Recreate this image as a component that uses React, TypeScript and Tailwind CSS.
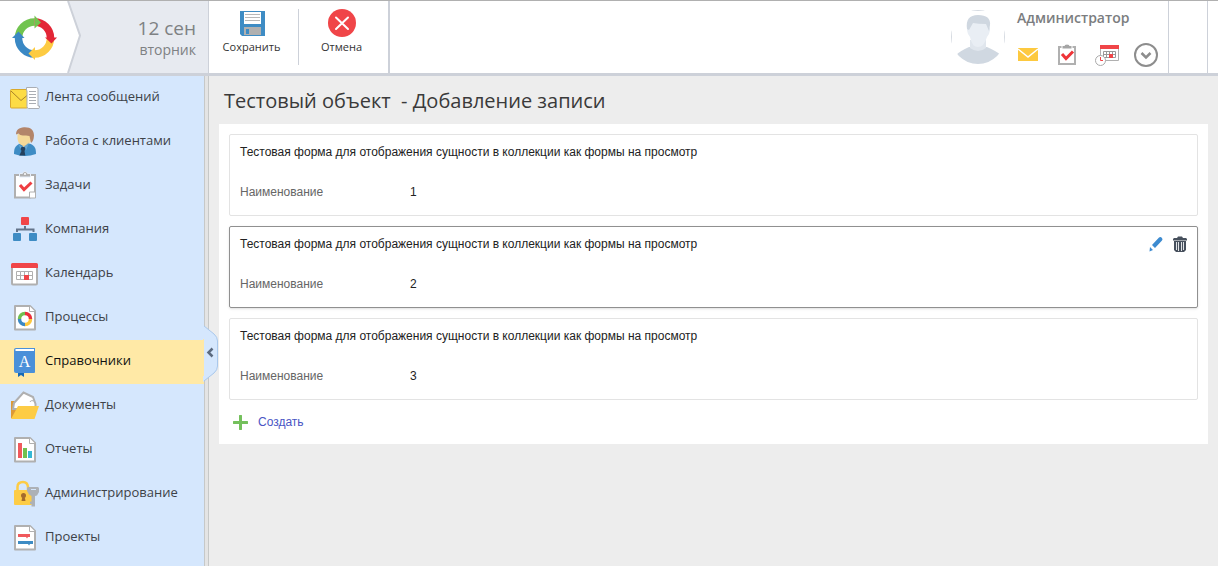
import React from "react";

const PageIcon = ({ children }: { children?: React.ReactNode }) => (
  <g>
    <path d="M6 4h15l5 5v18.500H6z" fill="#fff" stroke="#b0b0b0" strokeWidth="2" strokeLinejoin="round" />
    <path d="M20.500 4v5.500H26" fill="#fff" stroke="#b0b0b0" />
    {children}
  </g>
);

const icons: Record<string, React.ReactNode> = {
  feed: (
    <>
      <rect x="1.500" y="7.500" width="17" height="18.500" rx="1" fill="#fddc45" stroke="#d9a92c" />
      <path d="M2 9l10 9.500 6-5" fill="none" stroke="#a8822a" />
      <path d="M17.500 5.500h10q1.500 0 1.500 2v16.500h1.500v1.500q0 1-1.500 1H19.500q-1.500 0-1.500-2V8.500h-.5z" fill="#fff" stroke="#a9adb3" />
      <path d="M20 9.500h7M20 12.500h7M20 15.500h7M20 18.500h7M20 21.500h7" stroke="#a9adb3" />
    </>
  ),
  clients: (
    <>
      <path d="M5 28c0-7 2-9 7-10.500h8c5 1.500 7 3.500 7 10.500q-11 4-22 0z" fill="#3e8cc4" />
      <path d="M11 16l4 6 5-5v-3h-9z" fill="#e9c58a" />
      <path d="M8.500 8v5q1 6 6 6.500 6 0 8.500-6.500V7z" fill="#f5d998" />
      <path d="M7 8.500C7 4 10 1.500 15 1.200c7-.3 10 3 10 8.300-.3 4-1 6-3 7.500L20.500 10c-5-.5-9 0-11-2.500z" fill="#b3856a" />
      <path d="M9 17.500l4.500 4-1.500 2.500zM20 16.500l-6 5 3 3z" fill="#62a4d2" />
      <path d="M12.500 21h3l1 2-1 2 .8 4.500h-6l2.200-4.500-1-2z" fill="#24405c" />
    </>
  ),
  tasks: (
    <>
      <path d="M6 5h20v17l-5 5.500H6z" fill="#fff" stroke="#b0b0b0" strokeWidth="2" />
      <path d="M20.500 28v-6h6v6z" fill="#fff" stroke="#b0b0b0" />
      <path d="M10.500 7V3.500H13.500Q14 1.500 16 1.500t2.500 2H21.500V7z" fill="#b0b0b0" stroke="#e6effb" />
      <circle cx="16" cy="4" r="1" fill="#fff" />
      <path d="M11 15l4 4.500L22.500 12.500" fill="none" stroke="#ee3e42" strokeWidth="3" />
    </>
  ),
  company: (
    <>
      <path d="M8 18v-2.500h16.500V18M16 15v-3" fill="none" stroke="#64748a" strokeWidth="2" />
      <rect x="12" y="3" width="8" height="8" rx="1" fill="#f04548" />
      <rect x="4" y="19" width="8" height="8" rx="1" fill="#3e8cc4" />
      <rect x="20" y="19" width="8" height="8" rx="1" fill="#3e8cc4" />
    </>
  ),
  calendar: (
    <>
      <rect x="3" y="7" width="25" height="19.500" rx="1" fill="#fff" stroke="#b0b0b0" strokeWidth="2" />
      <path d="M2 10V6.500Q2 5 3.500 5h24Q29 5 29 6.500V10z" fill="#f04548" />
      <path d="M7.500 17.500v4h16v-8h-12v8M7.500 17.500h16M11.500 13.500h-4v4M15.500 13.500v8M19.500 13.500v8" fill="none" stroke="#b0b0b0" />
      <rect x="15" y="17" width="5" height="5" fill="#f04548" />
    </>
  ),
  processes: (
    <PageIcon>
      <g fill="none" strokeWidth="3.500">
        <path d="M10.500 17a5.500 5.500 0 0 1 5.500-5.500" stroke="#71c050" />
        <path d="M16 11.500a5.500 5.500 0 0 1 5.500 5.500" stroke="#ea2f3b" />
        <path d="M21.500 17a5.500 5.500 0 0 1-5.500 5.500" stroke="#fdc83e" />
        <path d="M16 22.500a5.500 5.500 0 0 1-5.500-5.500" stroke="#3a88c4" />
      </g>
    </PageIcon>
  ),
  reference: (
    <>
      <path d="M9 25h6v6l-3-2-3 2z" fill="#1768b4" />
      <path d="M5 4q0-2 2-2h19v24q0 1-1 1H7q-2 0-2-2z" fill="#4a90d9" />
      <path d="M6.500 3H25v2H6.500z" fill="#fff" />
      <text x="15.500" y="21" textAnchor="middle" fontSize="16" fill="#fff" fontFamily="Liberation Serif, serif">A</text>
    </>
  ),
  documents: (
    <>
      <path d="M2 11h9v17H2z" fill="#dd9a37" />
      <path d="M5 13L14.500 2.500 24 7l2.500 7v5H4z" fill="#fff" stroke="#b0b0b0" strokeWidth="2" />
      <path d="M21 12q1-2.500 5-.5" fill="none" stroke="#b0b0b0" />
      <path d="M9 16h21l-4.500 13H2z" fill="#fdcc45" />
    </>
  ),
  reports: (
    <PageIcon>
      <path d="M9 9h4v15H9z" fill="#f0595c" />
      <path d="M14 14h4v10h-4z" fill="#71c050" />
      <path d="M19 17h4v7h-4z" fill="#35b8d5" />
    </PageIcon>
  ),
  admin: (
    <>
      <path d="M8.500 13V9q0-5 5.500-5 4.500 0 5 5v4" fill="none" stroke="#fdcc45" strokeWidth="2.500" />
      <rect x="5" y="12" width="18" height="15" rx="1" fill="#fdcc45" />
      <circle cx="14.500" cy="17.500" r="2.500" fill="#a46c2c" />
      <path d="M13.500 18h2l1 5h-4z" fill="#a46c2c" />
      <path d="M19 9h10l1 1v4l-2 3.500-2 .5v10.500h-3.500V26H21v-2.500h1.500V18L20 16.500 18 13v-3z" fill="#adb1b6" />
      <rect x="22" y="11" width="5" height="1" fill="#d5e7fd" />
    </>
  ),
  projects: (
    <PageIcon>
      <path d="M9 12h12v3h-2l-1 1.500-1-1.500H9z" fill="#f0595c" />
      <path d="M9 19h15v3h-3l-1 1.500-1-1.500H9z" fill="#3e8cc4" />
    </PageIcon>
  ),
};

const menu = [
  { icon: "feed", label: "Лента сообщений" },
  { icon: "clients", label: "Работа с клиентами" },
  { icon: "tasks", label: "Задачи" },
  { icon: "company", label: "Компания" },
  { icon: "calendar", label: "Календарь" },
  { icon: "processes", label: "Процессы" },
  { icon: "reference", label: "Справочники", active: true },
  { icon: "documents", label: "Документы" },
  { icon: "reports", label: "Отчеты" },
  { icon: "admin", label: "Администрирование" },
  { icon: "projects", label: "Проекты" },
];

const Logo = () => (
  <svg viewBox="0 0 46 46" className="w-[46px] h-[46px]">
    <g fill="none" strokeWidth="7.500">
      <path d="M7.500 24a16 16 0 0 1 16-16" stroke="#71c44f" />
      <path d="M23.500 8a16 16 0 0 1 16 16" stroke="#e32636" />
      <path d="M39.500 24a16 16 0 0 1-16 16" stroke="#fdcb42" />
      <path d="M23.500 40a16 16 0 0 1-16-16" stroke="#3a88c4" />
    </g>
    <path d="M23.500 1.500l6.500 7-6.500 6z" fill="#71c44f" />
    <path d="M34 23.500h12l-5.500 6z" fill="#e32636" />
    <path d="M24 33v13l-6.500-6.500z" fill="#fdcb42" />
    <path d="M1 24h12.500L7.500 17.500z" fill="#3a88c4" />
  </svg>
);

const Header = () => (
  <header className="flex h-[76px] shrink-0 bg-white border-t border-t-[#b0b0b0] border-b-3 border-b-[#cdd1d9]">
    <div className="flex w-[209px] bg-[#e7eaf0] border-r border-[#cdd1d9]">
      <a href="#" aria-label="Главная" className="flex items-center justify-center w-[67px] bg-white">
        <Logo />
      </a>
      <svg viewBox="0 0 14 72" className="w-[14px] h-full" preserveAspectRatio="none">
        <path d="M0 0h1l12 34.500L1 72H0z" fill="#fff" />
        <path d="M1 0l12 34.500L1 72" fill="none" stroke="#cdd1d9" strokeWidth="2" />
      </svg>
      <div className="flex-1 pt-[15px] pr-3 text-right text-[#7e8183]">
        <div className="text-[19px] leading-6">12 сен</div>
        <div className="text-sm leading-5">вторник</div>
      </div>
    </div>

    <div className="flex items-start w-[181px] border-r-2 border-[#cdd1d9] text-[11px] text-[#333]">
      <button className="flex flex-col items-center w-[89px] pt-2 pr-1">
        <svg viewBox="0 0 28 28" className="w-7 h-7">
          <path d="M2 2h25v25H4l-2-2z" fill="#3e8cc4" />
          <path d="M6 3h17v12H6z" fill="#fff" />
          <path d="M7 5.500h15M7 8.500h15M7 11.500h15" stroke="#b8b8b8" />
          <path d="M6 18h17v8H6z" fill="#b0b0b0" />
          <path d="M8 20h3v5H8z" fill="#3e8cc4" />
        </svg>
        <span className="leading-5">Сохранить</span>
      </button>
      <div className="w-px h-14 mt-2 bg-[#cdd1d9]" />
      <button className="flex flex-col items-center flex-1 pt-2 pr-1">
        <svg viewBox="0 0 28 28" className="w-7 h-7">
          <circle cx="14" cy="14" r="14" fill="#f04548" />
          <path d="M8 8.500l12 11.500M20 8.500L8 20" stroke="#fff" strokeWidth="2" strokeLinecap="round" />
        </svg>
        <span className="leading-5">Отмена</span>
      </button>
    </div>

    <div className="flex flex-1 justify-end">
      <svg viewBox="0 0 54 54" className="w-[54px] h-[54px] mt-[9px]">
        <defs>
          <clipPath id="avatar">
            <circle cx="27" cy="27" r="27" />
          </clipPath>
        </defs>
        <g clipPath="url(#avatar)">
          <path d="M0 18h1v18H0zM53 18h1v18h-1zM19 0h16v1H19z" fill="#d5dae1" />
          <path d="M5 45q4-4 13-8h18q9 4 14 8v10H5z" fill="#d0d8e1" />
          <path d="M19 30h16v8q-8 6-16 0z" fill="#e0e6ed" />
          <path d="M17 17q-2 1 0 7l2 3q2 10 8 10t9-10l2-3q2-6 0-7l-3-7H20z" fill="#e9eef4" />
          <path d="M16 19Q14 5 27 5q13 0 12 10l-1 6-3-7q-8 0-13-1l-4 7z" fill="#cfd7e0" />
        </g>
      </svg>
      <div className="w-[164px] pt-[7px] pl-3 border-r border-[#cdd1d9]">
        <div className="text-sm leading-5 font-semibold text-[#7b7d80]">Администратор</div>
        <div className="flex items-center pt-[13px]">
          <button aria-label="Сообщения" className="w-10">
            <svg viewBox="0 0 28 28" className="w-7 h-7">
              <path d="M1 7h20v13H1z" fill="#fdc93f" />
              <path d="M1 8l10 8 10-8" fill="none" stroke="#fff" strokeWidth="1.500" />
            </svg>
          </button>
          <button aria-label="Задачи" className="w-9">
            <svg viewBox="0 0 28 28" className="w-7 h-7">
              <path d="M2 6h16v17H2z" fill="#fff" stroke="#b0b0b0" strokeWidth="2" />
              <path d="M5 8V4.500h2.500Q8 3 10 3t2.500 1.500H15V8z" fill="#a5a5a5" stroke="#fff" />
              <path d="M5 13l4 4.500 7-7" fill="none" stroke="#ee3438" strokeWidth="3" />
            </svg>
          </button>
          <button aria-label="Календарь" className="w-10">
            <svg viewBox="0 0 28 28" className="w-7 h-7">
              <path d="M7.500 5.500h18v14h-18z" fill="#fff" stroke="#b0b0b0" />
              <path d="M7 4h19v4H7z" fill="#f04548" />
              <path d="M10.500 10.500h12v6h-12zM10.500 13.500h12M13.500 10.500v6M16.500 10.500v6M19.500 10.500v6" fill="none" stroke="#999" />
              <path d="M16 13h4v4h-4z" fill="#f04548" />
              <circle cx="7.500" cy="19.500" r="5" fill="#fff" stroke="#aaa" />
              <path d="M7.500 16v3.500H10" fill="none" stroke="#f04548" />
            </svg>
          </button>
          <button aria-label="Ещё">
            <svg viewBox="0 0 28 28" className="w-7 h-7">
              <circle cx="13" cy="14" r="11" fill="#fff" stroke="#8d8d8d" strokeWidth="2" />
              <path d="M8.500 12l4.500 4.500 4.500-4.500" fill="none" stroke="#8d8d8d" strokeWidth="2.500" />
            </svg>
          </button>
        </div>
      </div>
      <div className="w-[39px] border-r border-[#cdd1d9]" />
      <div className="w-[10px]" />
    </div>
  </header>
);

const Sidebar = () => (
  <aside className="relative flex w-[209px] shrink-0">
    <nav className="flex-1 bg-[#d5e7fd]">
      {menu.map((item) => (
        <a
          key={item.icon}
          href="#"
          className={`flex items-center h-11 pl-[9px] text-[13px] ${
            item.active ? "bg-[#ffe9a6] text-[#111]" : "text-[#3d4248]"
          }`}
        >
          <svg viewBox="0 0 32 32" className="w-8 h-8">
            {icons[item.icon]}
          </svg>
          <span className="pl-1 pb-0.5">{item.label}</span>
        </a>
      ))}
    </nav>
    <div className="w-[5px] border-x border-[#c6c8c8] bg-[#e4e4e4]" />
    {/* collapse handle */}
    <button aria-label="Свернуть меню" className="absolute left-[203px] top-[249px]">
      <svg viewBox="0 0 16 58" className="w-4 h-[58px]">
        <path d="M0 0L11 9q3.500 3 3.500 7v25q0 4-3.500 7L0 57z" fill="#d5e7fd" />
        <path d="M1 1l10 8q3.500 3 3.500 7v25q0 4-3.500 7L1 56" fill="none" stroke="#a9c8ec" />
        <path d="M9.500 23.500L5.500 27.500l4 4" fill="none" stroke="#5c6b80" strokeWidth="2.500" />
        <path d="M0 14h1v37H0z" fill="#ffe9a6" />
      </svg>
    </button>
  </aside>
);

const Record = ({ name, selected }: { name: string; selected?: boolean }) => (
  <div
    className={`h-[82px] pl-[10px] pr-[9px] pt-2 border rounded-xs ${
      selected ? "border-[#909090] shadow-sm" : "border-[#e3e3e3]"
    }`}
  >
    <div className="flex justify-between">
      <h2 className="leading-[18px] text-[#222]">
        Тестовая форма для отображения сущности в коллекции как формы на просмотр
      </h2>
      {selected && (
        <div className="flex items-center gap-2">
          <button aria-label="Изменить">
            <svg viewBox="0 0 16 16" className="w-4 h-4">
              <path d="M4 9l7-7.500q1.500-1 3 .5 1 1.500 0 2.500L7 12zM2 11l3 3-3.500 1.500z" fill="#3d8bd0" />
            </svg>
          </button>
          <button aria-label="Удалить">
            <svg viewBox="0 0 16 16" className="w-4 h-4">
              <path d="M1 3l1-1h3l1-1.500h4L11 2h3l1 1v1.500H1z" fill="#47505d" />
              <path d="M2 5h12v9l-2 2H4l-2-2z" fill="#47505d" />
              <path d="M4.500 6v8M6.500 6v9M9.500 6v9M11.500 6v8" stroke="#e0e3e6" />
            </svg>
          </button>
        </div>
      )}
    </div>
    <dl className="flex pt-[22px] leading-[18px]">
      <dt className="w-[170px] text-[#666]">Наименование</dt>
      <dd className="text-[#222]">{name}</dd>
    </dl>
  </div>
);

const App = () => {
  return (
    <div className="flex flex-col min-h-screen bg-[#ededed] font-['Open_Sans',sans-serif]">
      <Header />
      <div className="flex flex-1">
        <Sidebar />
        <main className="flex-1 px-[10px]">
          <h1 className="h-12 pl-[5px] pt-[10px] text-xl leading-[30px] whitespace-pre text-[#3a3a3a]">
            Тестовый объект  - Добавление записи
          </h1>
          <div className="bg-white p-[10px] font-['Liberation_Sans',sans-serif] text-xs">
            <div className="flex flex-col gap-[10px]">
              <Record name="1" />
              <Record name="2" selected />
              <Record name="3" />
            </div>
            <button className="flex items-center gap-[10px] mt-[13px] ml-1 mb-[3px] h-[18px] text-[#4a55c4]">
              <svg viewBox="0 0 15 15" className="w-[15px] h-[15px]">
                <path d="M7.500 1v13M1 7.500h13" stroke="#74c05c" strokeWidth="3" strokeLinecap="round" />
              </svg>
              Создать
            </button>
          </div>
        </main>
      </div>
    </div>
  );
};

export default App;
